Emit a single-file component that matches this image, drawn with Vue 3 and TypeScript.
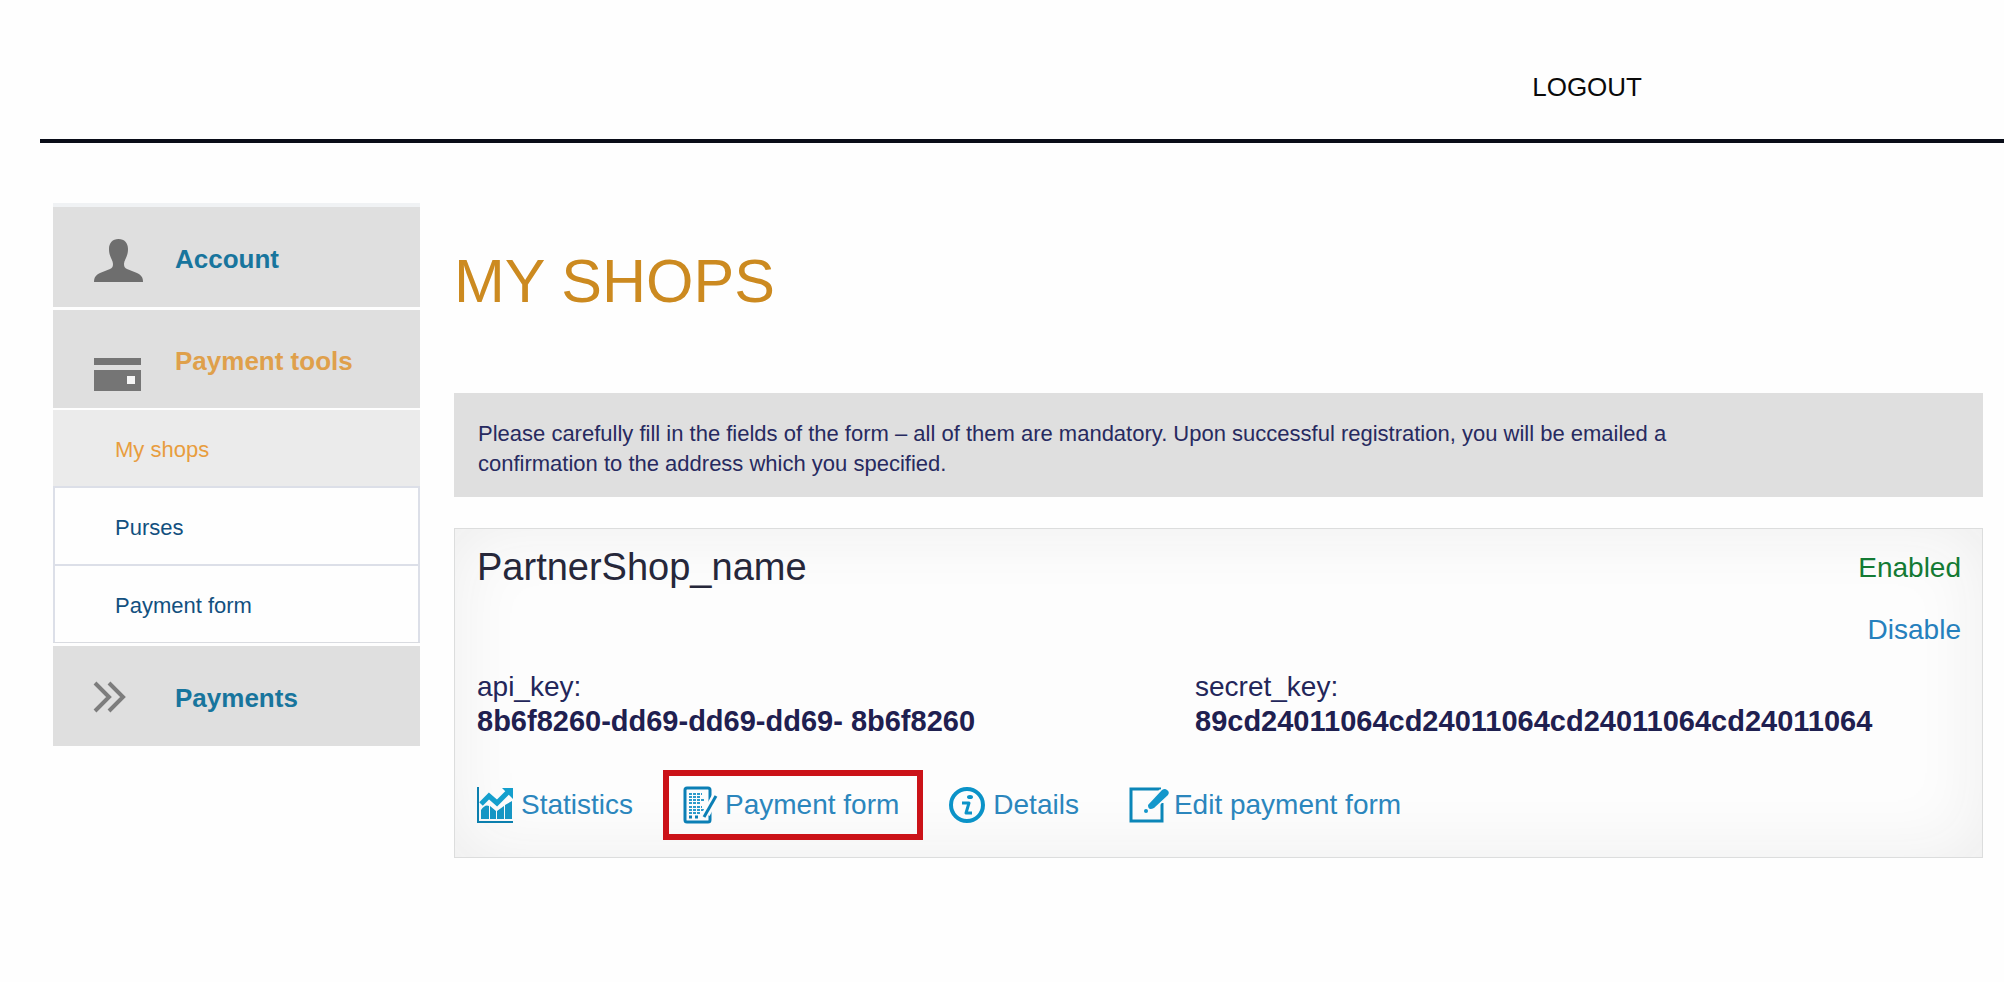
<script setup lang="ts">
interface Tool { id: string; label: string; marked?: boolean }

const subItems = [
  { label: 'My shops', active: true },
  { label: 'Purses', active: false },
  { label: 'Payment form', active: false },
]
const tools: Tool[] = [
  { id: 'statistics', label: 'Statistics' },
  { id: 'form', label: 'Payment form', marked: true },
  { id: 'details', label: 'Details' },
  { id: 'edit', label: 'Edit payment form' },
]
</script>

<template>
  <div class="page">
    <header class="header">
      <a class="logout" href="#">LOGOUT</a>
    </header>

    <div class="layout">
      <nav class="sidebar" aria-label="Main">
        <a class="section" href="#">
          <svg class="section-icon" viewBox="0 0 49 49" aria-hidden="true">
            <path d="M24.500 4c6 0 9.500 4 9.500 10 0 8-4 11-4 15 0 3 1 4 3 5l10 4c4 2 6 4 6 9H0c0-5 2-7 6-9l10-4c2-1 3-2 3-5 0-4-4-7-4-15 0-6 3.500-10 9.500-10z" fill="#6e6e6e" />
          </svg>
          <span>Account</span>
        </a>
        <a class="section current" href="#">
          <svg class="section-icon" viewBox="0 0 49 49" aria-hidden="true">
            <path d="M0 21h47v7H0zM0 33h47v21H0z" fill="#757575" />
            <path d="M33 39h8v8h-8z" fill="#f5f5f5" />
          </svg>
          <span>Payment tools</span>
        </a>
        <ul class="sub">
          <li v-for="item in subItems" :key="item.label">
            <a href="#" :class="{ active: item.active }">{{ item.label }}</a>
          </li>
        </ul>
        <a class="section last" href="#">
          <svg class="section-icon" viewBox="0 0 49 49" aria-hidden="true">
            <path d="M1 9l14 14-14 14M15 9l14 14-14 14" fill="none" stroke="#7d7d7d" stroke-width="4" />
          </svg>
          <span>Payments</span>
        </a>
      </nav>

      <main class="main">
        <h1>MY SHOPS</h1>
        <div class="notice">
          <p>Please carefully fill in the fields of the form – all of them are mandatory. Upon successful registration, you will be emailed a confirmation to the address which you specified.</p>
        </div>

        <section class="shop">
          <div class="shop-head">
            <h2>PartnerShop_name</h2>
            <div class="state">
              <span class="enabled">Enabled</span>
              <a class="disable" href="#">Disable</a>
            </div>
          </div>
          <dl class="keys">
            <div>
              <dt>api_key:</dt>
              <dd>8b6f8260-dd69-dd69-dd69- 8b6f8260</dd>
            </div>
            <div>
              <dt>secret_key:</dt>
              <dd>89cd24011064cd24011064cd24011064cd24011064</dd>
            </div>
          </dl>
          <div class="tools">
            <a v-for="tool in tools" :key="tool.id" href="#" class="tool" :class="[tool.id, { marked: tool.marked }]">
              <svg v-if="tool.id === 'statistics'" viewBox="0 0 36 36" aria-hidden="true">
                <path d="M1 0v35h35" fill="none" stroke="#0b7fae" stroke-width="2" />
                <path d="M4 17l8-8 8 7 11-11" fill="none" stroke="#149fcd" stroke-width="5" />
                <path d="M25 1h11v11z" fill="#149fcd" />
                <path d="M4 32V23q4-6 8-4v13zM13 32V19l6 5v8zM20 32v-8l7-5v13zM28 32V18l7-4v18z" fill="#1596c4" />
              </svg>
              <svg v-else-if="tool.id === 'form'" viewBox="0 0 36 36" aria-hidden="true">
                <rect x="2" y="1" width="25" height="34" rx="2" fill="none" stroke="#0b7fb5" stroke-width="3" />
                <path d="M6 7h13M6 10h12M6 13h15M6 16h12M6 20h13M6 23h15M6 26h11" stroke="#2d9acb" stroke-width="2" stroke-dasharray="3 1" />
                <path d="M6 30h3M12 30h3" stroke="#0b7fb5" stroke-width="3" />
                <path d="M23 27L33 9" stroke="#fdfdfd" stroke-width="8" />
                <path d="M21 30L33 9" stroke="#0b7fb5" stroke-width="3" />
              </svg>
              <svg v-else-if="tool.id === 'details'" viewBox="0 0 36 36" aria-hidden="true">
                <circle cx="18" cy="18" r="16" fill="none" stroke="#0b93c8" stroke-width="4" />
                <path d="M13 16h7l-3 10h6" fill="none" stroke="#0b93c8" stroke-width="3" stroke-linejoin="round" />
                <ellipse cx="21" cy="10" rx="3" ry="2" fill="#0b93c8" />
              </svg>
              <svg v-else class="wide" viewBox="0 0 40 36" aria-hidden="true">
                <path d="M32 2H2v32h31V16" fill="none" stroke="#0b86b8" stroke-width="3" />
                <path d="M22 19L35 6" stroke="#fafafa" stroke-width="11" />
                <path d="M19 18L33 3q3-2 5 0 3 2 1 5L25 21q-6 3-6-3z" fill="#1497cb" />
                <circle cx="17" cy="24" r="2" fill="#1497cb" />
              </svg>
              <span>{{ tool.label }}</span>
            </a>
          </div>
        </section>
      </main>
    </div>
  </div>
</template>

<style>
body { margin: 0; background: #fefefe; }
</style>

<style scoped>
.page { font-family: "Liberation Sans", Arial, sans-serif; color: #23265a; }
a { text-decoration: none; color: inherit; }
h1, h2, p, ul, dl, dd { margin: 0; padding: 0; font-weight: 400; }
.header { display: flex; justify-content: flex-end; margin-left: 40px; padding: 72px 362px 37px 0; border-bottom: 4px solid #090c18; }
.logout { color: #0a0a0a; font-size: 26px; line-height: 30px; }
.layout { display: flex; align-items: flex-start; gap: 34px; padding: 60px 21px 40px 53px; }
.sidebar { flex: 0 0 367px; box-sizing: border-box; border-top: 4px solid #f0f2f4; }
.section { display: flex; align-items: center; gap: 32px; box-sizing: border-box; height: 100px; padding: 4px 0 0 41px; background: #dfdfdf; color: #18759d; font-size: 26px; font-weight: 700; }
.section-icon { flex: none; width: 49px; height: 49px; overflow: visible; }
.current { margin-top: 3px; height: 98px; color: #dfa04b; }
.sub { list-style: none; margin: 2px 0 3px; border-bottom: 1px solid #d9dbe0; }
.sub a { display: flex; align-items: center; height: 72px; padding: 4px 0 0 60px; border: solid #dcdfe8; border-width: 2px 2px 0; font-size: 22px; color: #12507f; }
.sub a.active { background: #ebebeb; border-color: #ebebeb; border-top-width: 0; color: #e89d3e; }
.main { flex: 1; min-width: 0; padding-top: 38px; }
h1 { font-size: 61px; line-height: 80px; color: #cc8a20; }
.notice { margin-top: 72px; padding: 26px 24px 18px; background: #dfdfdf; }
.notice p { max-width: 1230px; font-size: 22px; line-height: 30px; color: #272a60; }
.shop { margin-top: 31px; padding: 18px 21px 17px 22px; border: 1px solid #dcdddd; background: #fdfdfd; box-shadow: inset 0 0 70px #ededed; }
.shop-head { display: flex; justify-content: space-between; align-items: flex-start; }
h2 { font-size: 38px; line-height: 40px; color: #26273a; }
.state { display: flex; flex-direction: column; align-items: flex-end; font-size: 28px; line-height: 42px; gap: 20px; }
.enabled { color: #147a34; }
.disable { color: #2580bd; }
.keys { display: grid; grid-template-columns: 718px 1fr; margin-top: 19px; font-size: 28px; line-height: 34px; }
dd { font-size: 29px; font-weight: 700; color: #1f2050; }
.tools { display: flex; align-items: center; margin-top: 32px; font-size: 28px; line-height: 32px; color: #2b86bd; }
.tool { display: flex; align-items: center; gap: 8px; }
.tool svg { flex: none; width: 36px; height: 36px; overflow: visible; }
.tool svg.wide { width: 40px; }
.marked { gap: 6px; margin: 0 26px 0 30px; padding: 11px 18px 11px 14px; border: 6px solid #cb1218; }
.edit { margin-left: 50px; gap: 5px; }
</style>
